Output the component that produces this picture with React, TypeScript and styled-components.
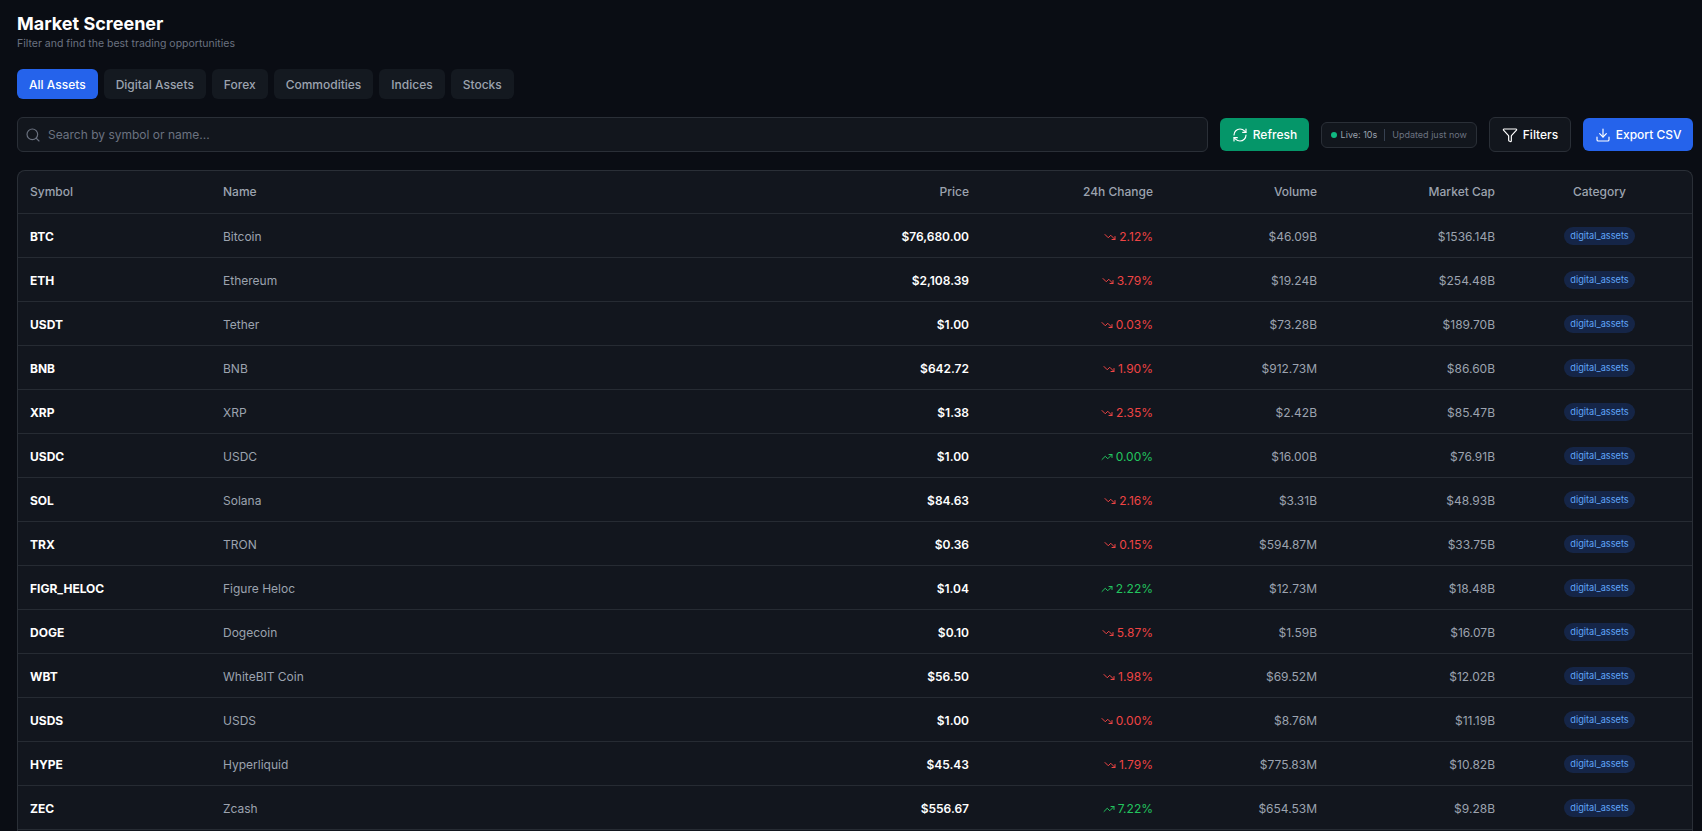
import { createGlobalStyle, styled } from 'styled-components';
import { Download, Funnel, RefreshCw, Search, TrendingDown, TrendingUp } from 'lucide-react';

const GlobalStyle = createGlobalStyle`
  html, body {
    margin: 0;
    height: 100%;
    overflow: hidden;
    background: #0a0d14;
  }
  body {
    font-family: Inter, "Liberation Sans", sans-serif;
    color: #fff;
  }
`;

type Asset = {
  symbol: string;
  name: string;
  price: string;
  change: number;
  up?: boolean;
  volume: string;
  cap: string;
};

const ASSETS: Asset[] = [
  { symbol: 'BTC', name: 'Bitcoin', price: '$76,680.00', change: 2.12, volume: '$46.09B', cap: '$1536.14B' },
  { symbol: 'ETH', name: 'Ethereum', price: '$2,108.39', change: 3.79, volume: '$19.24B', cap: '$254.48B' },
  { symbol: 'USDT', name: 'Tether', price: '$1.00', change: 0.03, volume: '$73.28B', cap: '$189.70B' },
  { symbol: 'BNB', name: 'BNB', price: '$642.72', change: 1.9, volume: '$912.73M', cap: '$86.60B' },
  { symbol: 'XRP', name: 'XRP', price: '$1.38', change: 2.35, volume: '$2.42B', cap: '$85.47B' },
  { symbol: 'USDC', name: 'USDC', price: '$1.00', change: 0, up: true, volume: '$16.00B', cap: '$76.91B' },
  { symbol: 'SOL', name: 'Solana', price: '$84.63', change: 2.16, volume: '$3.31B', cap: '$48.93B' },
  { symbol: 'TRX', name: 'TRON', price: '$0.36', change: 0.15, volume: '$594.87M', cap: '$33.75B' },
  { symbol: 'FIGR_HELOC', name: 'Figure Heloc', price: '$1.04', change: 2.22, up: true, volume: '$12.73M', cap: '$18.48B' },
  { symbol: 'DOGE', name: 'Dogecoin', price: '$0.10', change: 5.87, volume: '$1.59B', cap: '$16.07B' },
  { symbol: 'WBT', name: 'WhiteBIT Coin', price: '$56.50', change: 1.98, volume: '$69.52M', cap: '$12.02B' },
  { symbol: 'USDS', name: 'USDS', price: '$1.00', change: 0, volume: '$8.76M', cap: '$11.19B' },
  { symbol: 'HYPE', name: 'Hyperliquid', price: '$45.43', change: 1.79, volume: '$775.83M', cap: '$10.82B' },
  { symbol: 'ZEC', name: 'Zcash', price: '$556.67', change: 7.22, up: true, volume: '$654.53M', cap: '$9.28B' },
];

const TABS = ['All Assets', 'Digital Assets', 'Forex', 'Commodities', 'Indices', 'Stocks'];

export default function App() {
  return (
    <Page>
      <GlobalStyle />
      <Title>Market Screener</Title>
      <Subtitle>Filter and find the best trading opportunities</Subtitle>

      <Tabs>
        {TABS.map((tab, i) => (
          <Tab key={tab} $active={i === 0}>
            {tab}
          </Tab>
        ))}
      </Tabs>

      <Toolbar>
        <SearchBox>
          <Search size={16} strokeWidth={1.75} />
          <SearchInput placeholder="Search by symbol or name..." />
        </SearchBox>
        <ActionButton $bg="#059669">
          <RefreshCw size={16} strokeWidth={1.75} />
          Refresh
        </ActionButton>
        <LivePill>
          <LiveDot />
          <LiveText>Live: 10s</LiveText>
          <PillDivider />
          <UpdatedText>Updated just now</UpdatedText>
        </LivePill>
        <ActionButton $bg="#12161d" $outlined>
          <Funnel size={16} strokeWidth={1.75} />
          Filters
        </ActionButton>
        <ActionButton $bg="#2563eb">
          <Download size={16} strokeWidth={1.75} />
          Export CSV
        </ActionButton>
      </Toolbar>

      <TableCard>
        <Table>
          <colgroup>
            <col style={{ width: 193 }} />
            <col style={{ width: 385 }} />
            <col style={{ width: 385 }} />
            <col style={{ width: 184 }} />
            <col style={{ width: 164 }} />
            <col style={{ width: 178 }} />
            <col style={{ width: 185 }} />
          </colgroup>
          <thead>
            <tr>
              <HeadCell>Symbol</HeadCell>
              <HeadCell>Name</HeadCell>
              <HeadCell $align="right">Price</HeadCell>
              <HeadCell $align="right">24h Change</HeadCell>
              <HeadCell $align="right">Volume</HeadCell>
              <HeadCell $align="right">Market Cap</HeadCell>
              <HeadCell $align="center">Category</HeadCell>
            </tr>
          </thead>
          <tbody>
            {ASSETS.map((a) => (
              <tr key={a.symbol}>
                <Cell $weight={700}>{a.symbol}</Cell>
                <Cell>{a.name}</Cell>
                <Cell $align="right" $weight={600}>
                  {a.price}
                </Cell>
                <Cell $align="right">
                  <Change $up={a.up}>
                    {a.up ? <TrendingUp size={12} /> : <TrendingDown size={12} />}
                    {a.change.toFixed(2)}%
                  </Change>
                </Cell>
                <Cell $align="right">{a.volume}</Cell>
                <Cell $align="right">{a.cap}</Cell>
                <Cell $align="center">
                  <Badge>digital_assets</Badge>
                </Cell>
              </tr>
            ))}
          </tbody>
        </Table>
      </TableCard>
    </Page>
  );
}

const Page = styled.div`
  padding: 12px 9px 0 17px;
`;

const Title = styled.h1`
  margin: 0;
  font-size: 18px;
  line-height: 24px;
  font-weight: 700;
  color: #fff;
`;

const Subtitle = styled.p`
  margin: 0 0 17px;
  font-size: 10.5px;
  line-height: 16px;
  color: #6b7280;
`;

const Tabs = styled.div`
  display: flex;
  gap: 6px;
  margin-bottom: 18px;
`;

const Tab = styled.button<{ $active?: boolean }>`
  height: 30px;
  padding: 0 12px;
  border: 0;
  border-radius: 6px;
  font-family: inherit;
  font-size: 12px;
  font-weight: 500;
  color: ${(p) => (p.$active ? '#fff' : '#9ca3af')};
  background: ${(p) => (p.$active ? '#2563eb' : '#141920')};
`;

const Toolbar = styled.div`
  display: flex;
  align-items: center;
  gap: 12px;
  margin-bottom: 18px;
`;

const SearchBox = styled.label`
  flex: 1;
  height: 35px;
  box-sizing: border-box;
  display: flex;
  align-items: center;
  gap: 7px;
  padding: 0 7px;
  background: #12161d;
  border: 1px solid #2a2f37;
  border-radius: 6px;
  color: #6b7280;
`;

const SearchInput = styled.input`
  flex: 1;
  padding: 0;
  border: 0;
  outline: 0;
  background: transparent;
  font-family: inherit;
  font-size: 12px;
  color: #fff;

  &::placeholder {
    color: #6b7280;
  }
`;

const ActionButton = styled.button<{ $bg: string; $outlined?: boolean }>`
  height: ${(p) => (p.$outlined ? '35px' : '33px')};
  box-sizing: border-box;
  display: flex;
  align-items: center;
  gap: 5px;
  padding: 0 ${(p) => (p.$outlined ? '12px' : '11.5px')};
  border: ${(p) => (p.$outlined ? '1px solid #2a2f37' : '0')};
  border-radius: 6px;
  background: ${(p) => p.$bg};
  color: #fff;
  font-family: inherit;
  font-size: 12px;
  font-weight: 500;
`;

const LivePill = styled.div`
  height: 26px;
  box-sizing: border-box;
  display: flex;
  align-items: center;
  padding: 0 9px;
  background: #12161d;
  border: 1px solid #2a2f37;
  border-radius: 6px;
  font-size: 9px;
`;

const LiveDot = styled.span`
  width: 6px;
  height: 6px;
  margin-right: 4px;
  border-radius: 50%;
  background: #10b981;
`;

const LiveText = styled.span`
  color: #9ca3af;
`;

const PillDivider = styled.span`
  width: 1px;
  height: 12px;
  margin: 0 7px;
  background: #374151;
`;

const UpdatedText = styled.span`
  color: #6b7280;
`;

// open at the bottom: the list carries on below the fold
const TableCard = styled.div`
  height: calc(100vh - 170px);
  box-sizing: border-box;
  background: #12161e;
  border: 1px solid #2a2f37;
  border-bottom: 0;
  border-radius: 8px 8px 0 0;
  overflow: hidden;
`;

const Table = styled.table`
  width: 100%;
  table-layout: fixed;
  border-collapse: collapse;
`;

const HeadCell = styled.th<{ $align?: string }>`
  height: 41px;
  padding: 0 12px 1px;
  text-align: ${(p) => p.$align ?? 'left'};
  font-size: 12px;
  font-weight: 500;
  color: #9ca3af;
  border-bottom: 1px solid #262b33;
`;

const Cell = styled.td<{ $align?: string; $weight?: number }>`
  height: 42px;
  padding: 1px 12px 0;
  text-align: ${(p) => p.$align ?? 'left'};
  font-size: 12px;
  font-weight: ${(p) => p.$weight ?? 400};
  color: ${(p) => (p.$weight ? '#fff' : '#9ca3af')};
  border-bottom: 1px solid #262b33;
`;

const Change = styled.span<{ $up?: boolean }>`
  color: ${(p) => (p.$up ? '#22c55e' : '#ef4444')};

  svg {
    margin-right: 3px;
    vertical-align: -2px;
  }
`;

const Badge = styled.span`
  display: inline-block;
  padding: 0 6px;
  line-height: 18px;
  border-radius: 9px;
  font-size: 9.2px;
  color: #60a5fa;
  background: rgba(37, 99, 235, 0.2);
`;
